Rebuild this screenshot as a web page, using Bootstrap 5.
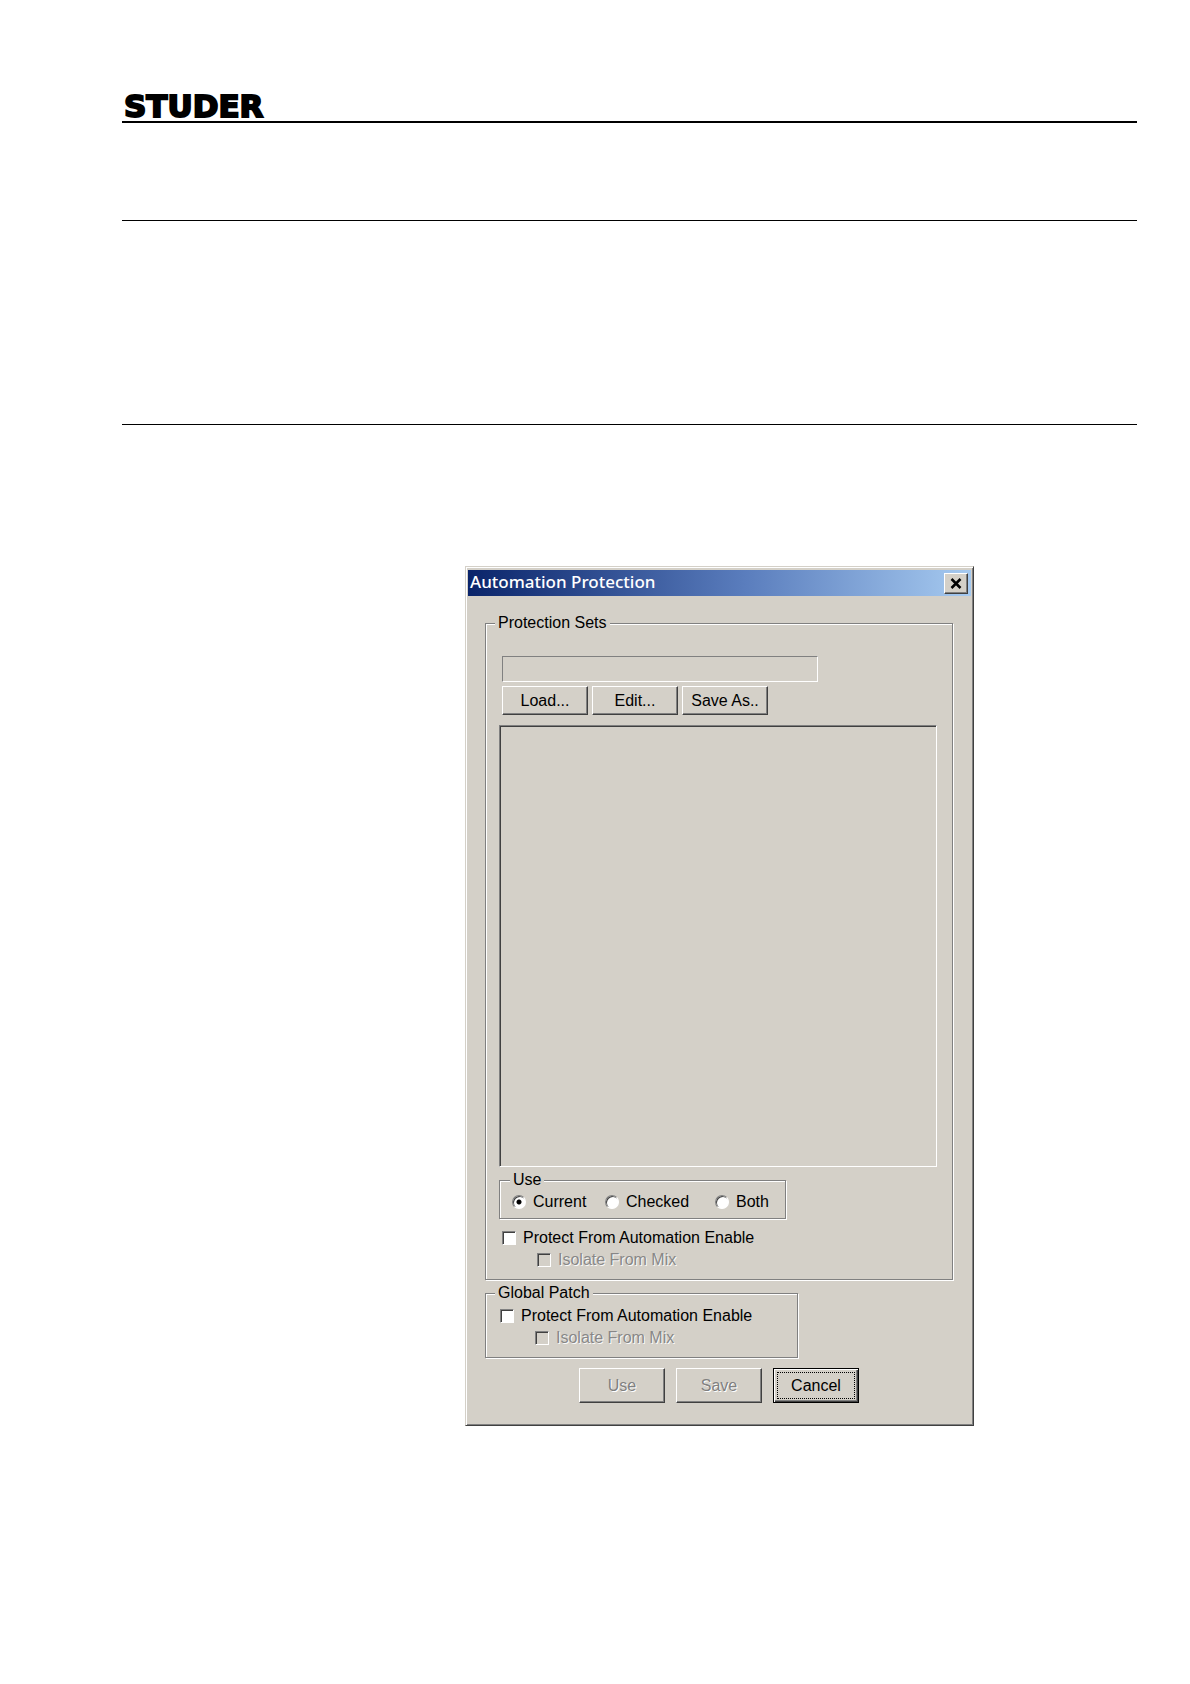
<!DOCTYPE html>
<html lang="en">
<head>
<meta charset="utf-8">
<meta name="viewport" content="width=device-width, initial-scale=1">
<title>Automation Protection</title>
<link href="https://cdn.jsdelivr.net/npm/bootstrap@5.3.0/dist/css/bootstrap.min.css" rel="stylesheet">
<style>
  :root { --face: #d4d0c8; --shade: #808080; --dark: #404040; --lite: #fff; }
  body { background: #fff; color: #000; font-family: "Liberation Sans", Arial, sans-serif; font-size: 16px; line-height: 20px; }
  .sheet { padding: 91px 53px 80px 122px; }
  .sheet-head { border-bottom: 2px solid #000; }
  .brand-word { font: 700 31px/30px "DejaVu Sans", sans-serif; -webkit-text-stroke: 2px #000; padding-left: 2px; }
  .rule { border: 0; border-top: 1px solid #000; opacity: 1; margin: 0; }
  .rule-first { margin-top: 97px; }
  .rule-second { margin-top: 203px; }

  .dialog { width: 100%; max-width: 509px; margin: 141px 0 0 343px; padding: 3px 2px; background: var(--face);
    border: 1px solid; border-color: var(--face) var(--dark) var(--dark) var(--face);
    box-shadow: inset 1px 1px var(--lite), inset -1px -1px var(--shade); }
  .title-bar { height: 26px; padding: 0 3px 0 2px; background: linear-gradient(90deg, #0a246a, #5a7dbd 55%, #a6caf0); color: #fff; }
  .title-bar h1 { font: 500 17px/24px "Noto Sans", sans-serif; margin: 0; padding-bottom: 2px; }
  .pane { padding: 17px 18px 19px 17px; }

  .bevel { background: var(--face); color: #000; border: 1px solid; border-radius: 0; padding: 0;
    border-color: var(--lite) var(--dark) var(--dark) var(--lite); box-shadow: inset -1px -1px var(--shade); }
  .bevel:disabled { color: var(--shade); text-shadow: 1px 1px var(--lite); }
  .close-btn { width: 24px; height: 21px; }
  .set-btn { width: 86px; height: 29px; }
  .end-btn { width: 86px; height: 35px; }
  .default-btn { border-color: #000; padding: 2px;
    box-shadow: inset 1px 1px var(--lite), inset -1px -1px var(--dark), inset -2px -2px var(--shade); }
  .default-btn span { display: block; height: 27px; line-height: 25px; margin: 0 1px; border: 1px dotted #000; }

  .etched { border: 1px solid var(--shade); box-shadow: 1px 1px var(--lite), inset 1px 1px var(--lite); padding: 0 15px 8px 13px; }
  .etched > legend { float: none; width: auto; margin: 0 0 0 -4px; padding: 0 3px; font-size: 16px; line-height: 20px; background: var(--face); }
  .sets-body { padding-top: 23px; }
  .set-name { width: 316px; max-width: 100%; height: 26px; background: var(--face) !important; border: 1px solid; border-radius: 0;
    border-color: var(--shade) var(--lite) var(--lite) var(--shade); padding: 2px 4px; }
  .inset-row { margin-left: 3px; }
  .set-list { height: 442px; margin-top: 10px; border: 1px solid; border-color: var(--shade) var(--lite) var(--lite) var(--shade);
    box-shadow: inset 1px 1px var(--dark); }
  .use-group { width: 287px; max-width: 100%; margin-top: 3px; padding: 0 12px 6px; }
  .use-group > legend { margin-left: -2px; }
  .use-options { display: grid; grid-template-columns: 93px 110px auto; padding-top: 2px; }
  .patch-group { width: 313px; max-width: 100%; margin-top: 3px; }
  .patch-group .checks { padding-top: 2px; margin-left: 1px; }

  .option { display: flex; align-items: center; gap: 7px; }
  .checks .option { height: 22px; }
  .checks .option-sub { margin-left: 35px; }
  .option input { appearance: none; flex: none; width: 14px; height: 14px; margin: 0; background: #fff; border: 1px solid;
    border-color: var(--shade) var(--lite) var(--lite) var(--shade); box-shadow: inset 1px 1px var(--dark); }
  .option input[type=radio] { border-radius: 50%; }
  .option input[type=radio]:checked { background: radial-gradient(circle, #000 0 2px, #fff 3px); }
  .option input:disabled { background: var(--face); }
  .option input:disabled + span { color: var(--shade); text-shadow: 1px 1px var(--lite); opacity: .9; }
  .end-row { margin-top: 10px; gap: 11px; }
  @media (max-width: 1100px) { .sheet { padding-left: 24px; padding-right: 24px; } .dialog { margin-left: auto; margin-right: auto; } }
</style>
<script src="https://cdn.jsdelivr.net/npm/bootstrap@5.3.0/dist/js/bootstrap.bundle.min.js" defer></script>
</head>
<body>
<div class="sheet">
  <header class="sheet-head"><div class="brand-word">STUDER</div></header>
  <hr class="rule rule-first">
  <hr class="rule rule-second">

  <main class="dialog" role="dialog" aria-labelledby="dlgTitle">
    <div class="title-bar d-flex align-items-center justify-content-between">
      <h1 id="dlgTitle">Automation Protection</h1>
      <button type="button" class="bevel close-btn d-flex align-items-center justify-content-center" aria-label="Close">
        <svg width="12" height="11" viewBox="0 0 12 11" aria-hidden="true"><path d="M1.5 1l9 9M10.500 1l-9 9" stroke="#000" stroke-width="2.500" fill="none"/></svg>
      </button>
    </div>
    <form class="pane">
      <fieldset class="etched">
        <legend>Protection Sets</legend>
        <div class="sets-body">
          <div class="inset-row d-flex flex-column gap-1">
            <input type="text" class="set-name" aria-label="Protection set name" readonly>
            <div class="d-flex gap-1">
              <button type="button" class="bevel set-btn">Load...</button>
              <button type="button" class="bevel set-btn">Edit...</button>
              <button type="button" class="bevel set-btn">Save As..</button>
            </div>
          </div>
          <div class="set-list" role="listbox" aria-label="Protection sets"></div>
          <fieldset class="etched use-group">
            <legend>Use</legend>
            <div class="use-options">
              <label class="option"><input type="radio" name="use" checked><span>Current</span></label>
              <label class="option"><input type="radio" name="use"><span>Checked</span></label>
              <label class="option"><input type="radio" name="use"><span>Both</span></label>
            </div>
          </fieldset>
          <div class="checks inset-row mt-2">
            <label class="option"><input type="checkbox"><span>Protect From Automation Enable</span></label>
            <label class="option option-sub"><input type="checkbox" disabled><span>Isolate From Mix</span></label>
          </div>
        </div>
      </fieldset>
      <fieldset class="etched patch-group">
        <legend>Global Patch</legend>
        <div class="checks">
          <label class="option"><input type="checkbox"><span>Protect From Automation Enable</span></label>
          <label class="option option-sub"><input type="checkbox" disabled><span>Isolate From Mix</span></label>
        </div>
      </fieldset>
      <div class="end-row d-flex justify-content-center">
        <button type="button" class="bevel end-btn" disabled>Use</button>
        <button type="button" class="bevel end-btn" disabled>Save</button>
        <button type="button" class="bevel end-btn default-btn"><span>Cancel</span></button>
      </div>
    </form>
  </main>
</div>
</body>
</html>
